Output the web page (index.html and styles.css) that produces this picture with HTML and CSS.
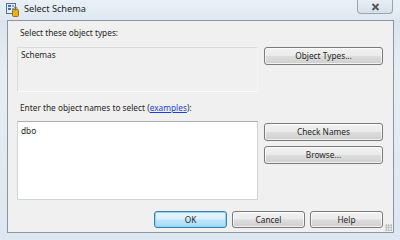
FILE: index.html
```html
<!DOCTYPE html>
<html>
<head>
<meta charset="utf-8">
<link rel="stylesheet" href="styles.css">
</head>
<body>
<div class="window">
  <div class="titlebar">
    <svg class="app-icon" width="13" height="14" viewBox="0 0 13 14">
      <rect x="0.5" y="0.5" width="9" height="10" fill="#e8eef7" stroke="#5a6f8c"/>
      <rect x="2" y="2" width="3" height="2" fill="#3a6fc4"/>
      <rect x="2" y="5" width="3" height="2" fill="#3a6fc4"/>
      <rect x="6" y="2" width="2" height="2" fill="#8aa6d4"/>
      <rect x="6" y="5" width="2" height="2" fill="#8aa6d4"/>
      <rect x="6.5" y="6.5" width="6" height="7" rx="1" fill="#e8b21c" stroke="#a07010"/>
      <rect x="8" y="4" width="3" height="3" rx="1.5" fill="none" stroke="#8a7a50"/>
    </svg>
    <span class="title">Select Schema</span>
    <span class="spacer"></span>
    <div class="close">
      <svg width="9" height="8" viewBox="0 0 9 8"><path d="M1.5 1 L7.5 7 M7.5 1 L1.5 7" stroke="#555" stroke-width="1.8" fill="none"/></svg>
    </div>
  </div>
  <div class="client">
    <div class="label first">Select these object types:</div>
    <div class="row">
      <div class="box readonly">Schemas</div>
      <div class="side">
        <button class="btn wide">Object Types...</button>
      </div>
    </div>
    <div class="label second">Enter the object names to select (<a class="link">examples</a>):</div>
    <div class="row">
      <div class="box names">dbo</div>
      <div class="side">
        <button class="btn wide">Check Names</button>
        <button class="btn wide">Browse...</button>
      </div>
    </div>
    <div class="footer">
      <button class="btn small default">OK</button>
      <button class="btn small">Cancel</button>
      <button class="btn small">Help</button>
    </div>
    <div class="grip"></div>
  </div>
</div>
</body>
</html>
```

FILE: styles.css
```css
* { box-sizing: border-box; }
html, body { margin: 0; padding: 0; }
body {
  width: 400px;
  height: 240px;
  overflow: hidden;
  font-family: "Noto Sans", "Open Sans", sans-serif;
  font-size: 8.3px;
  color: #262626;
  background: #dce6f0;
}
.window {
  width: 400px;
  height: 240px;
  display: flex;
  flex-direction: column;
  background: linear-gradient(to bottom, #d7e1ec 0%, #e6edf5 30%, #dde7f1 100%);
}
.titlebar {
  height: 20px;
  display: flex;
  align-items: flex-start;
  padding-left: 6px;
  background: linear-gradient(to bottom, #e9f0f7 0%, #dfe8f2 100%);
}
.app-icon { margin-top: 3px; }
.title {
  margin-left: 5px;
  margin-top: 3px;
  font-size: 9.2px;
  line-height: 12px;
  color: #1e1e1e;
}
.spacer { flex: 1; }
.close {
  width: 36px;
  height: 14px;
  margin-right: 7px;
  border: 1px solid #9aa4b0;
  border-top: none;
  border-radius: 0 0 4px 4px;
  background: linear-gradient(to bottom, #e8eef5 0%, #d6e0ea 100%);
  display: flex;
  align-items: center;
  justify-content: center;
}
.client {
  position: relative;
  flex: 1;
  margin: 0 6px 7px 7px;
  border: 1px solid #8e959e;
  background: #f0f0f0;
  padding: 0 10px 0 9px;
}
.label { padding-left: 3px; line-height: 12px; }
.label.first { margin-top: 6px; margin-bottom: 8px; }
.label.second { margin-top: 10px; margin-bottom: 7px; }
.link { color: #1a3fd6; text-decoration: underline; }
.row { display: flex; gap: 6px; }
.box {
  width: 241px;
  padding: 1px 3px;
  line-height: 12px;
}
.readonly {
  height: 45px;
  background: #f0f0f0;
  border: 1px solid #dcdcdc;
  border-right-color: #f6f6f6;
  border-bottom-color: #fbfbfb;
}
.names {
  height: 79px;
  padding-top: 3px;
  background: #ffffff;
  border: 1px solid #d0d4da;
  border-top-color: #abadb3;
}
.side {
  display: flex;
  flex-direction: column;
  gap: 5px;
}
.row + .label + .row .side { padding-top: 2px; }
.btn {
  font-family: inherit;
  font-size: 8.3px;
  color: #262626;
  height: 18px;
  padding: 0;
  line-height: 12px;
  border: 1px solid #7a7a7a;
  border-radius: 3px;
  background: linear-gradient(to bottom, #f2f2f2 0%, #ebebeb 48%, #dddddd 52%, #cfcfcf 100%);
  box-shadow: inset 0 0 0 1px rgba(255,255,255,0.7);
}
.wide { width: 119px; }
.footer {
  display: flex;
  justify-content: flex-end;
  gap: 5px;
  margin-top: 11px;
}
.small { width: 73px; height: 17px; }
.default {
  border-color: #3c7fb1;
  box-shadow: inset 0 0 0 1px #8fd4f5;
  background: linear-gradient(to bottom, #eaf6fd 0%, #d9f0fc 48%, #bee6fd 52%, #a7d9f5 100%);
}
.grip {
  position: absolute;
  right: 1px;
  bottom: 1px;
  width: 7px;
  height: 7px;
  background-image: radial-gradient(circle, #b0b0b0 0.8px, transparent 1px);
  background-size: 2.5px 2.5px;
}
```
